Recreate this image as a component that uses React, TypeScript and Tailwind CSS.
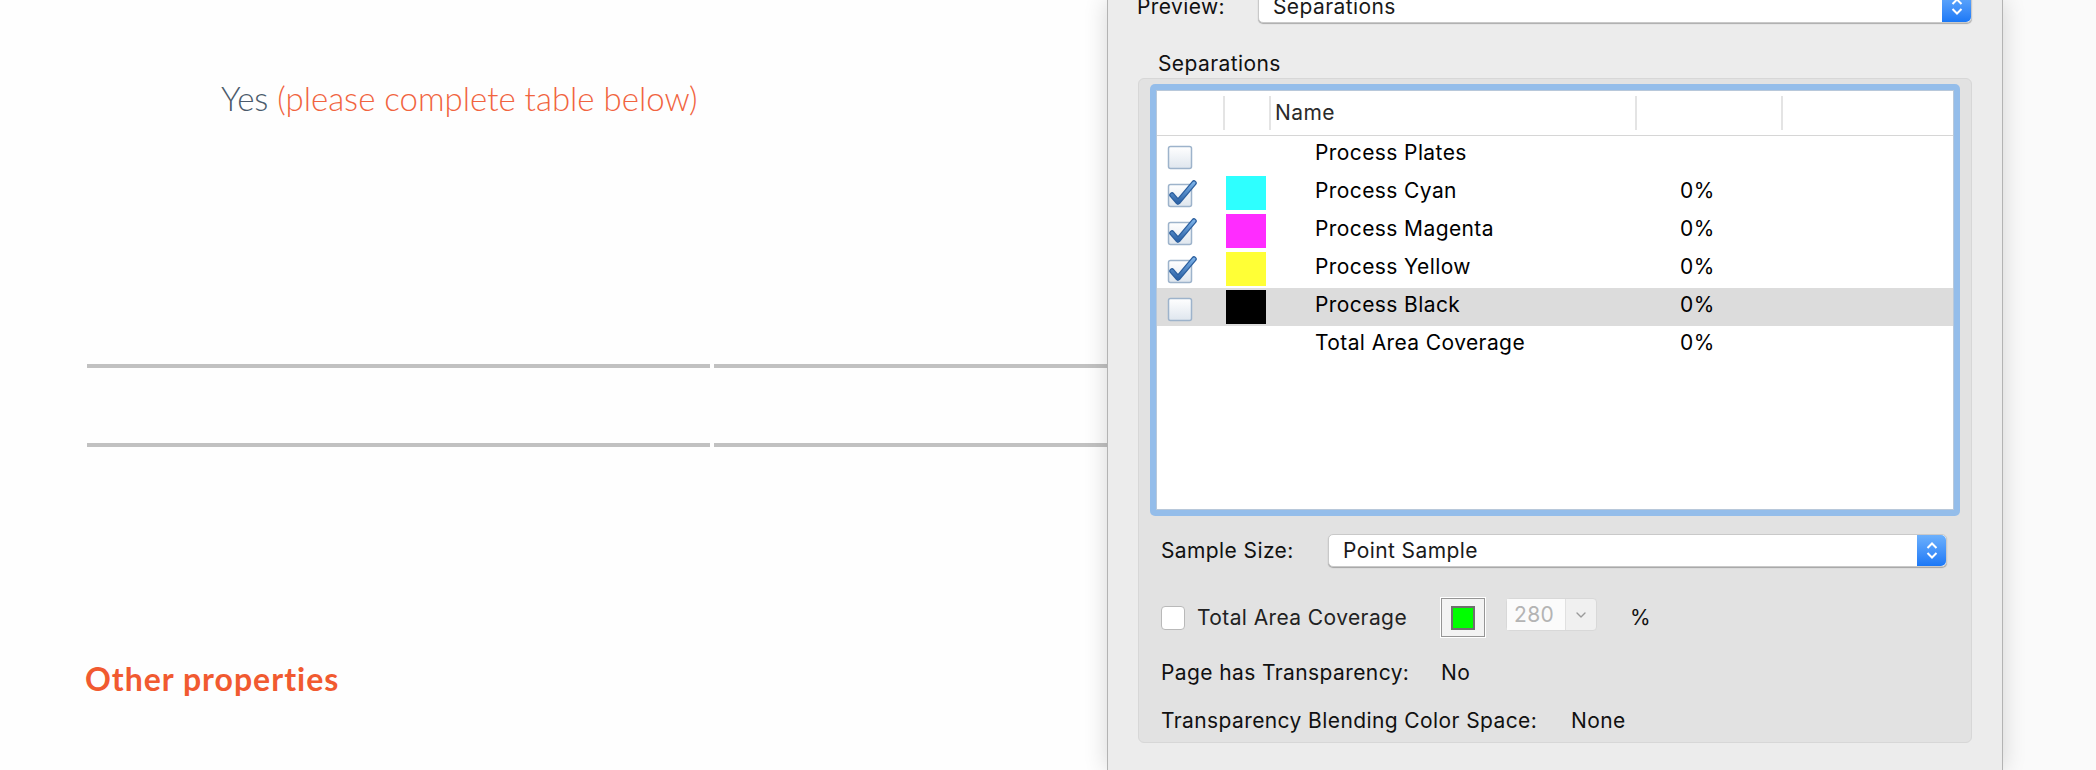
import { ChevronDown } from "lucide-react";

const rows = [
  { name: "Process Plates", swatch: null, checked: false, box: true, pct: "" },
  { name: "Process Cyan", swatch: "bg-[#2effff]", checked: true, box: true, pct: "0%" },
  { name: "Process Magenta", swatch: "bg-[#ff2cff]", checked: true, box: true, pct: "0%" },
  { name: "Process Yellow", swatch: "bg-[#ffff36]", checked: true, box: true, pct: "0%" },
  { name: "Process Black", swatch: "bg-black", checked: false, box: true, pct: "0%", selected: true },
  { name: "Total Area Coverage", swatch: null, checked: false, box: false, pct: "0%" },
];

function AquaCheck({ checked }: { checked: boolean }) {
  return (
    <svg width="32" height="28" viewBox="0 0 32 28">
      <defs>
        <linearGradient id="boxfill" x1="0" y1="0" x2="0" y2="1">
          <stop offset="0" stopColor="#ffffff" />
          <stop offset="1" stopColor="#dfe6ee" />
        </linearGradient>
        <linearGradient id="tick" x1="0" y1="0" x2="0" y2="1">
          <stop offset="0" stopColor="#7ab0e6" />
          <stop offset="1" stopColor="#2e64a8" />
        </linearGradient>
      </defs>
      <rect x="1.5" y="4.5" width="23" height="22" rx="2" fill="url(#boxfill)" stroke="#9db3cb" strokeWidth="1.5" />
      {checked && (
        <>
          <path d="M5 15 L11 22 L27 3" fill="none" stroke="#2c5f9e" strokeWidth="5.5" strokeLinejoin="round" strokeLinecap="round" />
          <path d="M5 15 L11 22 L27 3" fill="none" stroke="url(#tick)" strokeWidth="3" strokeLinejoin="round" strokeLinecap="round" />
        </>
      )}
    </svg>
  );
}

function Stepper() {
  return (
    <div className="flex w-[29px] flex-col items-center justify-center gap-[3px] rounded-r-[5px] bg-gradient-to-b from-[#6cb0fc] to-[#1a78f6]">
      <svg width="12" height="7" viewBox="0 0 12 7">
        <path d="M1.5 6 L6 1.5 L10.5 6" fill="none" stroke="white" strokeWidth="2" />
      </svg>
      <svg width="12" height="7" viewBox="0 0 12 7">
        <path d="M1.5 1 L6 5.5 L10.5 1" fill="none" stroke="white" strokeWidth="2" />
      </svg>
    </div>
  );
}

function PopUp({ label, className }: { label: string; className?: string }) {
  return (
    <div
      className={
        "flex h-[33px] rounded-[5px] border border-[#c9c9c9] bg-white shadow-[0_1px_1px_rgba(0,0,0,0.28)] " +
        (className ?? "")
      }
    >
      <div className="flex flex-1 items-center pl-[14px] text-[#1a1a1a]">{label}</div>
      <Stepper />
    </div>
  );
}

export default function App() {
  return (
    <div className="flex h-[770px] w-[2096px] overflow-hidden bg-[#fefefe]">
      {/* document behind the sheet */}
      <div className="w-[1107px] shrink-0 font-['Lato',sans-serif]">
        <p className="ml-[221px] mt-[78px] text-[33px] font-light leading-[40px] text-[#4b5a6b]">
          Yes <span className="text-[#f1643f]">(please complete table below)</span>
        </p>
        <div className="ml-[87px] mt-[246px] flex gap-[4px]">
          <div className="h-[4px] w-[623px] bg-[#c1c1c1]" />
          <div className="h-[4px] flex-1 bg-[#c1c1c1]" />
        </div>
        <div className="ml-[87px] mt-[75px] flex gap-[4px]">
          <div className="h-[4px] w-[623px] bg-[#c1c1c1]" />
          <div className="h-[4px] flex-1 bg-[#c1c1c1]" />
        </div>
        <h2 className="ml-[85px] mt-[214px] text-[32px] font-bold leading-[36px] tracking-[1px] text-[#f15a30] [font-variant-ligatures:none]">
          Other properties
        </h2>
      </div>

      {/* output preview sheet */}
      <div className="relative z-10 w-[896px] shrink-0 border-x border-[#b3b3b3] bg-[#ececec] px-[30px] font-['Inter',sans-serif] text-[21px] leading-[26px] tracking-[0.4px] text-[#111] shadow-[0_0_22px_rgba(0,0,0,0.16)]">
        <div className="-mt-[10px] flex h-[33px] items-center">
          <span className="-ml-[1px] w-[121px] shrink-0">Preview:</span>
          <PopUp label="Separations" className="flex-1" />
        </div>

        <div className="mt-[28px] pl-[20px]">Separations</div>

        <div className="mt-[1px] rounded-[6px] border border-[#d7d7d7] bg-[#e2e2e2] pb-[8px] pt-[5px]">
          <div className="mx-[11px] rounded-[5px] bg-[#94bdea] p-[6px]">
            <div className="h-[420px] border border-[#b8c8da] bg-white">
              <div className="grid h-[45px] grid-cols-[66px_46px_366px_146px_1fr] border-b border-[#d6d6d6]">
                <div />
                <div className="flex items-center">
                  <span className="h-[34px] w-[2px] bg-[#e4e4e4]" />
                </div>
                <div className="flex items-center">
                  <span className="h-[34px] w-[2px] bg-[#e4e4e4]" />
                  <span className="ml-[4px] text-[#2a2a2a]">Name</span>
                </div>
                <div className="flex items-center">
                  <span className="h-[34px] w-[2px] bg-[#e4e4e4]" />
                </div>
                <div className="flex items-center">
                  <span className="h-[34px] w-[2px] bg-[#e4e4e4]" />
                </div>
              </div>
              {rows.map((r) => (
                <div
                  key={r.name}
                  className={
                    "grid h-[38px] grid-cols-[66px_46px_366px_146px_1fr] items-center " +
                    (r.selected ? "bg-[#dcdcdc]" : "")
                  }
                >
                  <div className="pl-[10px] pt-[1px]">{r.box && <AquaCheck checked={r.checked} />}</div>
                  <div className="pl-[3px]">
                    {r.swatch && <div className={"h-[34px] w-[40px] " + r.swatch} />}
                  </div>
                  <div className="pb-[4px] pl-[46px] text-black">{r.name}</div>
                  <div className="pb-[4px] pl-[45px] text-black">{r.pct}</div>
                  <div />
                </div>
              ))}
            </div>
          </div>

          <div className="px-[22px]">
            <div className="mt-[18px] flex items-center">
              <span className="w-[167px] shrink-0">Sample Size:</span>
              <PopUp label="Point Sample" className="mr-[2px] flex-1" />
            </div>

            <div className="mt-[31px] flex h-[39px] items-center">
              <span className="h-[24px] w-[24px] shrink-0 rounded-[4px] border border-[#b9b9b9] bg-white" />
              <span className="ml-[12px] w-[244px] shrink-0 text-[#222]">Total Area Coverage</span>
              <div className="flex h-[39px] w-[44px] items-center justify-center border border-[#959595] bg-[#f3f3f3] shadow-[0_0_0_1px_#ffffff]">
                <div className="h-[24px] w-[24px] border-2 border-[#6f6f6f] bg-[#00ff00]" />
              </div>
              <div className="ml-[21px] flex h-[33px] w-[91px] self-start rounded-[4px] border border-[#d8d8d8] bg-[#f0f0f0]">
                <span className="flex w-[59px] items-center border-r border-[#e0e0e0] bg-[#fbfbfb] pl-[7px] text-[#b4b4b4]">
                  280
                </span>
                <span className="flex flex-1 items-center justify-center text-[#9a9a9a]">
                  <ChevronDown size={16} strokeWidth={2} />
                </span>
              </div>
              <span className="ml-[33px]">%</span>
            </div>

            <div className="mt-[23px] flex">
              <span className="w-[280px] shrink-0">Page has Transparency:</span>
              <span>No</span>
            </div>
            <div className="mt-[22px] flex">
              <span className="w-[410px] shrink-0">Transparency Blending Color Space:</span>
              <span>None</span>
            </div>
          </div>
        </div>
      </div>

      <div className="flex-1 bg-[#fafafa]" />
    </div>
  );
}
